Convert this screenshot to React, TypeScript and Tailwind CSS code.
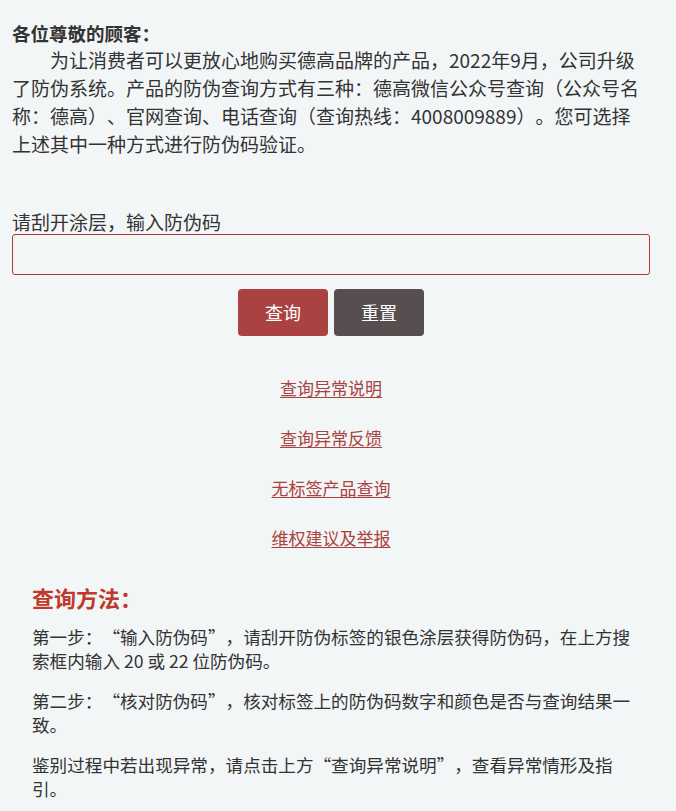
const links = ["查询异常说明", "查询异常反馈", "无标签产品查询", "维权建议及举报"];

const steps = [
  "第一步：“输入防伪码”，请刮开防伪标签的银色涂层获得防伪码，在上方搜索框内输入 20 或 22 位防伪码。",
  "第二步：“核对防伪码”，核对标签上的防伪码数字和颜色是否与查询结果一致。",
  "鉴别过程中若出现异常，请点击上方“查询异常说明”，查看异常情形及指引。",
];

const App = () => {
  return (
    <div
      className="min-h-[811px] w-full bg-[#f3f6f7] text-[#333333] [text-spacing-trim:space-all]"
      style={{ fontFamily: '"Noto Sans CJK SC", "Noto Sans", sans-serif' }}
    >
      <div className="w-[664px] pl-3 pr-[14px] pt-5">
        <p className="text-[18.5px] font-bold leading-[26px]">各位尊敬的顾客：</p>
        <p className="mr-2 indent-[2em] text-[19px] leading-[28px]">
          为让消费者可以更放心地购买德高品牌的产品，2022年9月，公司升级了防伪系统。产品的防伪查询方式有三种：德高微信公众号查询（公众号名称：德高）、官网查询、电话查询（查询热线：4008009889）。您可选择上述其中一种方式进行防伪码验证。
        </p>

        <label className="mt-[52px] block text-[19px] leading-[24px]">请刮开涂层，输入防伪码</label>
        <input
          type="text"
          className="block h-[41px] w-full rounded-[3px] border border-[#b03a2e] bg-transparent px-2 outline-none"
        />
        <div className="mt-[14px] flex justify-center gap-[6px]">
          <button className="h-[47px] w-[90px] rounded-[4px] bg-[#a94240] text-[18px] text-white">查询</button>
          <button className="h-[47px] w-[90px] rounded-[4px] bg-[#574f4f] text-[18px] text-white">重置</button>
        </div>

        <div className="mt-[40px] flex flex-col items-center gap-[26px]">
          {links.map((l) => (
            <a key={l} href="#" className="text-[17px] leading-[24px] text-[#a94240] underline underline-offset-2">
              {l}
            </a>
          ))}
        </div>
      </div>

      <div className="w-[644px] pl-8 pt-[32px] pb-4">
        <h2 className="text-[22px] font-bold leading-[30px] text-[#c0392b]">查询方法：</h2>
        <div className="mt-[13px] flex flex-col gap-[16px]">
          {steps.map((s) => (
            <p key={s} className="text-[17.6px] leading-[24px]">
              {s}
            </p>
          ))}
        </div>
      </div>
    </div>
  );
};

export default App;
